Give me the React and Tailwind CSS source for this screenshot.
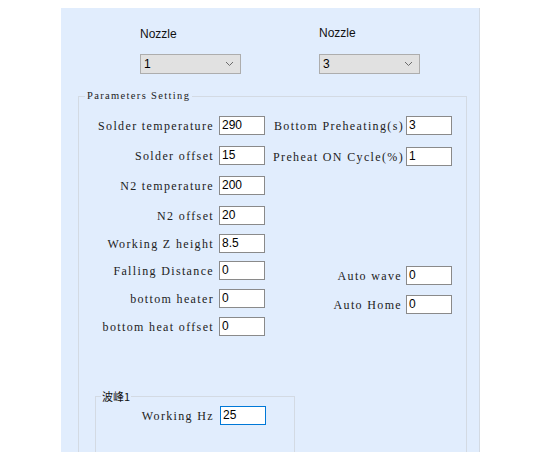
import React from "react"

const serif = "font-['Liberation_Serif','Times_New_Roman',serif] tracking-[1.35px]"
const sans = "font-['Liberation_Sans',Arial,sans-serif]"

const Box = ({ value, focused }) => (
  <div
    className={`h-[19px] w-[46px] bg-white border pl-[2px] text-[12px] leading-[17px] text-black ${sans} ${
      focused ? "border-[#0078d7]" : "border-[#8a8a8a]"
    }`}
  >
    {value}
  </div>
)

const Row = ({ label, value, gap = "gap-[5px]", className = "" }) => (
  <div className={`flex items-center justify-end h-[19px] ${gap} ${className}`}>
    <span className={`${serif} text-[12px] text-[#222] whitespace-pre`}>{label}</span>
    <Box value={value} />
  </div>
)

const Select = ({ value }) => (
  <div className={`flex items-center justify-between h-[20px] w-[101px] bg-[#e1e1e1] border border-[#adadad] pl-[3px] pr-[6px] text-[12px] text-black ${sans}`}>
    <span>{value}</span>
    <svg width="9" height="6" viewBox="0 0 9 6">
      <path d="M1 1 L4.5 4.5 L8 1" fill="none" stroke="#6b6b6b" strokeWidth="1" />
    </svg>
  </div>
)

export default function App() {
  return (
    <div className="w-[541px] h-[452px] bg-white overflow-hidden">
      <div className="ml-[61px] mt-[8px] w-[419px] h-[444px] bg-[#e1edfd] border-r border-[#d3dae3] overflow-hidden">
        {/* nozzle selectors */}
        <div className="flex h-[66px]">
          <div className="ml-[79px] w-[179px] flex flex-col">
            <div className={`mt-[19px] h-[14px] leading-[14px] text-[12px] text-[#111] ${sans}`}>Nozzle</div>
            <div className="mt-[13px]">
              <Select value="1" />
            </div>
          </div>
          <div className="flex flex-col">
            <div className={`mt-[18px] h-[14px] leading-[14px] text-[12px] text-[#111] ${sans}`}>Nozzle</div>
            <div className="mt-[14px]">
              <Select value="3" />
            </div>
          </div>
        </div>

        {/* parameters group */}
        <div className="relative ml-[17px] mt-[22px] w-[389px] h-[400px] border border-[#d3dae3]">
          <span className={`absolute -top-[7px] left-[6px] px-[2px] bg-[#e1edfd] ${serif} text-[10.5px] leading-[12px] text-[#222]`}>
            Parameters Setting
          </span>

          <div className="flex pt-[19px]">
            <div className="w-[186px] flex flex-col">
              <Row label="Solder temperature" value="290" />
              <Row label="Solder offset" value="15" className="mt-[11px]" />
              <Row label="N2 temperature" value="200" className="mt-[11px]" />
              <Row label="N2 offset" value="20" className="mt-[11px]" />
              <Row label="Working Z height" value="8.5" className="mt-[9px]" />
              <Row label="Falling Distance" value="0" className="mt-[8px]" />
              <Row label="bottom heater" value="0" className="mt-[9px]" />
              <Row label="bottom heat offset" value="0" className="mt-[9px]" />
            </div>
            <div className="w-[187px] flex flex-col">
              <Row label="Bottom Preheating(s)" value="3" gap="gap-[2px]" />
              <Row label="Preheat ON Cycle(%)" value="1" gap="gap-[2px]" className="mt-[12px]" />
              <Row label="Auto wave" value="0" gap="gap-[4px]" className="mt-[100px]" />
              <Row label="Auto Home" value="0" gap="gap-[4px]" className="mt-[10px]" />
            </div>
          </div>

          {/* wave group */}
          <div className="relative ml-[16px] mt-[60px] w-[200px] h-[80px] border border-[#d3dae3]">
            <span className="absolute -top-[8px] left-[5px] px-[1px] bg-[#e1edfd] font-['Noto_Sans_CJK_SC',sans-serif] text-[11px] leading-[14px] text-[#111]">
              波峰1
            </span>
            <div className="pt-[9px] w-[170px] flex items-center justify-end gap-[6px]">
              <span className={`${serif} text-[12px] text-[#222]`}>Working Hz</span>
              <Box value="25" focused />
            </div>
          </div>
        </div>
      </div>
    </div>
  )
}
